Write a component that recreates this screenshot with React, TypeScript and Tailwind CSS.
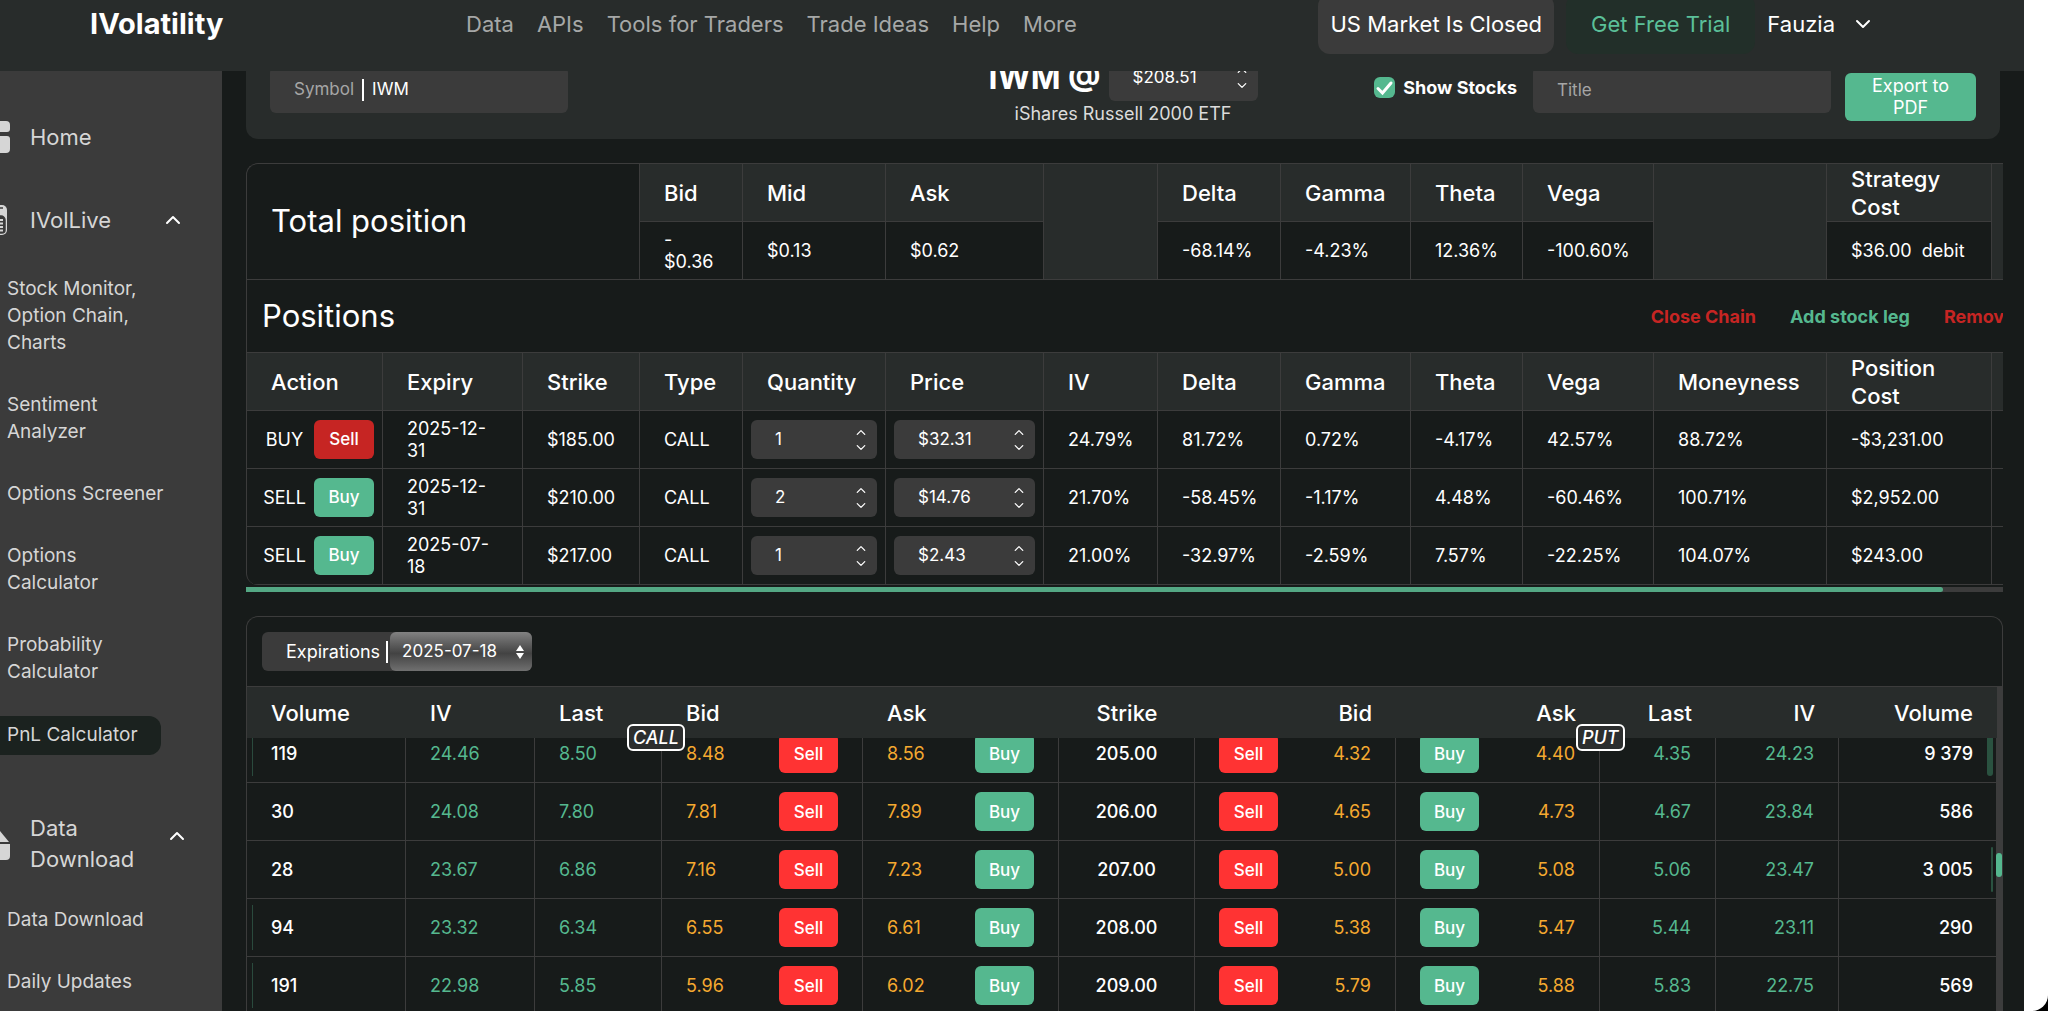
import { useState } from "react";
import { ChevronDown, ChevronUp } from "lucide-react";

const navLinks = ["Data", "APIs", "Tools for Traders", "Trade Ideas", "Help", "More"];

const positions = [
    { side: "BUY", expiry: "2025-12-31", strike: "$185.00", qty: "1", price: "$32.31", iv: "24.79%", delta: "81.72%", gamma: "0.72%", theta: "-4.17%", vega: "42.57%", money: "88.72%", cost: "-$3,231.00" },
    { side: "SELL", expiry: "2025-12-31", strike: "$210.00", qty: "2", price: "$14.76", iv: "21.70%", delta: "-58.45%", gamma: "-1.17%", theta: "4.48%", vega: "-60.46%", money: "100.71%", cost: "$2,952.00" },
    { side: "SELL", expiry: "2025-07-18", strike: "$217.00", qty: "1", price: "$2.43", iv: "21.00%", delta: "-32.97%", gamma: "-2.59%", theta: "7.57%", vega: "-22.25%", money: "104.07%", cost: "$243.00" },
];

const positionHeads = ["Action", "Expiry", "Strike", "Type", "Quantity", "Price", "IV", "Delta", "Gamma", "Theta", "Vega", "Moneyness", "Position Cost"];

// callBar / putBar: width class of the volume bar, empty when there is none
const chain = [
    { call: ["119", "24.46", "8.50", "8.48", "8.56"], strike: "205.00", put: ["4.32", "4.40", "4.35", "24.23", "9 379"], callBar: "w-px", putBar: "w-1.5" },
    { call: ["30", "24.08", "7.80", "7.81", "7.89"], strike: "206.00", put: ["4.65", "4.73", "4.67", "23.84", "586"], callBar: "", putBar: "" },
    { call: ["28", "23.67", "6.86", "7.16", "7.23"], strike: "207.00", put: ["5.00", "5.08", "5.06", "23.47", "3 005"], callBar: "", putBar: "w-0.5" },
    { call: ["94", "23.32", "6.34", "6.55", "6.61"], strike: "208.00", put: ["5.38", "5.47", "5.44", "23.11", "290"], callBar: "w-px", putBar: "" },
    { call: ["191", "22.98", "5.85", "5.96", "6.02"], strike: "209.00", put: ["5.79", "5.88", "5.83", "22.75", "569"], callBar: "w-px", putBar: "" },
];

function Header() {
    return (
        <header className="relative z-10 -mt-1.5 flex h-[77px] shrink-0 items-start bg-[#282c2b] pl-[90px] pr-[149px] text-[22px]">
            <div className="flex h-[60px] w-[136px] items-center">
                <a href="#home" className="text-[29px] font-bold text-white">
                    IVolatility
                </a>
            </div>
            <nav className="ml-60 flex h-[60px] items-center gap-[23px] text-[#a6a8a7]">
                {navLinks.map((link) => (
                    <a key={link} href="#nav" className="whitespace-nowrap hover:text-white">
                        {link}
                    </a>
                ))}
            </nav>
            <div className="ml-auto flex h-[60px] items-stretch gap-3 whitespace-nowrap text-white">
                <div className="flex items-center rounded-xl bg-[#3b3b3b] px-3">US Market Is Closed</div>
                <button type="button" className="rounded-xl bg-[#222f29] px-[25px] text-[#5bc099]">
                    Get Free Trial
                </button>
                <button type="button" className="flex items-center gap-4">
                    Fauzia
                    <ChevronDown className="h-6 w-6" strokeWidth={2} />
                </button>
            </div>
        </header>
    );
}

function SideLink({ text }: { text: string }) {
    return (
        <a href="#tool" className="block w-[170px] pl-[7px] text-[19px] leading-[27px] hover:text-white">
            {text}
        </a>
    );
}

function Sidebar() {
    return (
        <aside className="flex w-[222px] shrink-0 flex-col overflow-hidden bg-[#3b3b3b] text-[#d6d6d6]">
            <a href="#home" className="mt-[50px] flex h-8 items-center text-[22px]">
                <svg className="h-8 w-[30px] shrink-0" viewBox="0 0 30 32" fill="currentColor">
                    <path d="M0 0h6a4 4 0 0 1 4 4v4a3 3 0 0 1-3 3H0z" />
                    <path d="M0 15h7a3 3 0 0 1 3 3v10a4 4 0 0 1-4 4H0z" />
                </svg>
                Home
            </a>
            <button type="button" className="mt-[51px] flex h-8 items-center text-left text-[22px]">
                <svg className="h-8 w-[30px] shrink-0" viewBox="0 0 30 32" fill="none">
                    <path d="M0 1h2a5 5 0 0 1 5 5v20a5 5 0 0 1-5 5H0z" fill="currentColor" />
                    <path d="M0 4h3M0 12h1a4 4 0 0 1 4 4v10a3 3 0 0 1-3 3H0z" fill="#3b3b3b" stroke="#3b3b3b" strokeWidth="1.5" />
                    <path d="M0 16h3M0 19.500h3M0 23h3M0 26.500h3" stroke="currentColor" strokeWidth="2" />
                </svg>
                IVolLive
                <ChevronUp className="ml-[50px] h-6 w-6 text-white" />
            </button>
            <div className="mt-[39px] flex flex-col gap-[35px]">
                <SideLink text="Stock Monitor, Option Chain, Charts" />
                <SideLink text="Sentiment Analyzer" />
                <SideLink text="Options Screener" />
                <SideLink text="Options Calculator" />
                <SideLink text="Probability Calculator" />
            </div>
            <a href="#pnl" className="mt-[31px] flex h-[39px] w-[161px] items-center rounded-r-xl bg-[#1b221f] pl-[7px] text-[19px]">
                PnL Calculator
            </a>
            <button type="button" className="mt-[58px] flex items-center text-left text-[22px] leading-[31px]">
                <svg className="h-10 w-[30px] shrink-0" viewBox="0 0 30 40" fill="currentColor">
                    <path d="M0 7l9 11H0z" />
                    <path d="M0 20h10v12a4 4 0 0 1-4 4H0z" />
                </svg>
                <span className="w-[135px]">Data Download</span>
                <ChevronUp className="mb-4 h-6 w-6 text-white" />
            </button>
            <div className="mt-[31px] flex flex-col gap-[35px]">
                <SideLink text="Data Download" />
                <SideLink text="Daily Updates" />
            </div>
        </aside>
    );
}

function Stepper({ label, value, className = "h-[39px] w-full" }: { label: string; value: string; className?: string }) {
    return (
        <div className={`flex items-center rounded-md bg-[#3b3b3b] pl-6 pr-2 ${className}`}>
            <input aria-label={label} defaultValue={value} className="min-w-0 flex-1 bg-transparent text-[17px] text-white outline-none" />
            <span className="flex flex-col text-white">
                <button type="button" aria-label={`Increase ${label}`}>
                    <ChevronUp className="h-[15px] w-4" />
                </button>
                <button type="button" aria-label={`Decrease ${label}`}>
                    <ChevronDown className="h-[15px] w-4" />
                </button>
            </span>
        </div>
    );
}

function StrategyBar() {
    const [showStocks, setShowStocks] = useState(true);

    return (
        <section className="-mt-[30px] mr-[3px] grid grid-cols-[1fr_auto_1fr] items-center rounded-xl bg-[#282c2b] px-6 py-[13px]">
            <label className="flex h-[46px] w-[298px] items-center gap-2 rounded-md bg-[#3b3b3b] pl-6 text-[17px] text-[#a6a6a6]">
                Symbol
                <span className="h-[22px] w-0.5 bg-white" />
                <input defaultValue="IWM" className="w-40 bg-transparent text-white outline-none" />
            </label>
            <div className="text-center">
                <div className="flex items-center gap-2">
                    <h1 className="text-[32px] font-bold">IWM @</h1>
                    <Stepper label="Stock price" value="$208.51" className="h-[46px] w-[149px]" />
                </div>
                <p className="text-[18px] leading-6 text-[#dcdcdc]">iShares Russell 2000 ETF</p>
            </div>
            <div className="flex items-center justify-end">
                <label className="mb-1.5 flex items-center gap-2 text-[18px] font-bold">
                    <span className="relative h-[21px] w-[21px]">
                        <input
                            type="checkbox"
                            checked={showStocks}
                            onChange={() => setShowStocks(!showStocks)}
                            className="block h-[21px] w-[21px] appearance-none rounded-md bg-[#3b3b3b] checked:bg-[#55b88f]"
                        />
                        {showStocks && (
                            <svg className="pointer-events-none absolute inset-0 h-[21px] w-[21px]" viewBox="0 0 21 21" fill="none">
                                <path d="M4 11.500l4.500 4.500L17 6" stroke="#fff" strokeWidth="3" strokeLinecap="round" />
                            </svg>
                        )}
                    </span>
                    Show Stocks
                </label>
                <input
                    aria-label="Title"
                    placeholder="Title"
                    className="ml-4 h-[46px] w-[298px] rounded-md bg-[#3b3b3b] px-6 text-[17px] outline-none placeholder:text-[#a6a6a6]"
                />
                <button type="button" className="ml-3.5 mt-3.5 h-12 w-[131px] rounded-md bg-[#55b88f] px-4 text-[18px] leading-[22px]">
                    Export to PDF
                </button>
            </div>
        </section>
    );
}

const th = "h-[58px] border-b border-r border-[#3c3c3c] bg-[#282c2b] px-6 text-left text-[22px] font-medium leading-7";
const td = "h-[58px] border-b border-r border-[#3c3c3c] px-6 leading-[22px]";

function PositionCols() {
    return (
        <colgroup>
            <col className="w-[136px]" />
            <col className="w-[140px]" />
            <col className="w-[117px]" />
            <col className="w-[103px]" />
            <col className="w-[143px]" />
            <col className="w-[158px]" />
            <col className="w-[114px]" />
            <col className="w-[123px]" />
            <col className="w-[130px]" />
            <col className="w-[112px]" />
            <col className="w-[131px]" />
            <col className="w-[173px]" />
            <col className="w-[165px]" />
            <col className="w-[71px]" />
        </colgroup>
    );
}

function Positions() {
    return (
        <section className="mt-6">
            <div className="overflow-hidden rounded-l-xl border-l border-t border-[#3c3c3c] text-[18px]">
                <table className="w-full min-w-[1816px] table-fixed border-separate border-spacing-0">
                    <PositionCols />
                    <tbody>
                        <tr>
                            <th rowSpan={2} colSpan={3} className="border-b border-r border-[#3c3c3c] px-6 text-left text-[31px] font-normal">
                                Total position
                            </th>
                            <th className={th}>Bid</th>
                            <th className={th}>Mid</th>
                            <th className={th}>Ask</th>
                            <td rowSpan={2} className="border-b border-r border-[#3c3c3c] bg-[#282c2b]" />
                            <th className={th}>Delta</th>
                            <th className={th}>Gamma</th>
                            <th className={th}>Theta</th>
                            <th className={th}>Vega</th>
                            <td rowSpan={2} className="border-b border-r border-[#3c3c3c] bg-[#282c2b]" />
                            <th className={th}>Strategy Cost</th>
                            <td rowSpan={2} className="border-b border-[#3c3c3c] bg-[#282c2b]" />
                        </tr>
                        <tr>
                            <td className={td}>
                                -<br />
                                $0.36
                            </td>
                            <td className={td}>$0.13</td>
                            <td className={td}>$0.62</td>
                            <td className={td}>-68.14%</td>
                            <td className={td}>-4.23%</td>
                            <td className={td}>12.36%</td>
                            <td className={td}>-100.60%</td>
                            <td className={`${td} whitespace-pre`}>$36.00{"  "}debit</td>
                        </tr>
                    </tbody>
                </table>
                <div className="flex h-[73px] min-w-[1816px] items-center border-b border-[#3c3c3c] pl-[15px]">
                    <h2 className="text-[31px]">Positions</h2>
                    <div className="ml-auto flex gap-[34px] pr-6 font-bold">
                        <button type="button" className="text-[#c62523]">
                            Close Chain
                        </button>
                        <button type="button" className="text-[#55b88f]">
                            Add stock leg
                        </button>
                        <button type="button" className="text-[#c62523]">
                            Remove all
                        </button>
                    </div>
                </div>
                <table className="w-full min-w-[1816px] table-fixed border-separate border-spacing-0">
                    <PositionCols />
                    <thead>
                        <tr>
                            {positionHeads.map((head) => (
                                <th key={head} className={th}>
                                    {head}
                                </th>
                            ))}
                            <th className={th} />
                        </tr>
                    </thead>
                    <tbody>
                        {positions.map((p) => (
                            <tr key={p.strike}>
                                <td className="border-b border-r border-[#3c3c3c] px-2">
                                    <div className="flex items-center">
                                        <span className="flex-1 text-center">{p.side}</span>
                                        <button
                                            type="button"
                                            className={`h-[39px] w-[60px] rounded-md text-[17px] font-medium ${p.side === "BUY" ? "bg-[#c62523]" : "bg-[#55b88f]"}`}
                                        >
                                            {p.side === "BUY" ? "Sell" : "Buy"}
                                        </button>
                                    </div>
                                </td>
                                <td className={td}>{p.expiry}</td>
                                <td className={td}>{p.strike}</td>
                                <td className={td}>CALL</td>
                                <td className="border-b border-r border-[#3c3c3c] px-2">
                                    <Stepper label="Quantity" value={p.qty} />
                                </td>
                                <td className="border-b border-r border-[#3c3c3c] px-2">
                                    <Stepper label="Price" value={p.price} />
                                </td>
                                <td className={td}>{p.iv}</td>
                                <td className={td}>{p.delta}</td>
                                <td className={td}>{p.gamma}</td>
                                <td className={td}>{p.theta}</td>
                                <td className={td}>{p.vega}</td>
                                <td className={td}>{p.money}</td>
                                <td className={td}>{p.cost}</td>
                                <td className={td} />
                            </tr>
                        ))}
                    </tbody>
                </table>
            </div>
            <div className="mt-0.5 h-[5px] bg-[#3c3c3c]">
                <div className="h-full w-[96.6%] rounded-r-sm bg-[#54a884]" />
            </div>
        </section>
    );
}

function ChainCols() {
    return (
        <colgroup>
            <col className="w-[159px]" />
            <col className="w-[129px]" />
            <col className="w-[127px]" />
            <col className="w-[201px]" />
            <col className="w-[196px]" />
            <col className="w-[136px]" />
            <col className="w-[201px]" />
            <col className="w-[204px]" />
            <col className="w-[116px]" />
            <col className="w-[123px]" />
            <col className="w-[158px]" />
        </colgroup>
    );
}

const badge = "absolute top-[25px] rounded-md border-2 border-white bg-[#2c2e2e] px-1 text-[18px] font-medium italic leading-[23px]";

function OrderCell({ price, action, flip }: { price: string; action: "Sell" | "Buy"; flip?: boolean }) {
    return (
        <td className={`${td} text-[#f5a930]`}>
            <div className={`flex items-center justify-between ${flip ? "flex-row-reverse" : ""}`}>
                {price}
                <button
                    type="button"
                    className={`h-[39px] w-[59px] rounded-md text-[17px] font-medium text-white ${action === "Sell" ? "bg-[#ff3333]" : "bg-[#55b88f]"}`}
                >
                    {action}
                </button>
            </div>
        </td>
    );
}

function OptionChain() {
    return (
        <section className="mt-6 flex min-h-0 flex-1 flex-col rounded-t-xl border border-b-0 border-[#3c3c3c] text-[18px]">
            <div className="flex h-[69px] shrink-0 items-center pl-[15px]">
                <label className="flex h-[39px] items-center rounded-md bg-[#3b3b3b] pl-6">
                    Expirations
                    <span className="ml-1.5 h-[22px] w-0.5 bg-white" />
                    <span className="relative ml-0.5">
                        <select className="h-[39px] w-[142px] appearance-none rounded-md bg-linear-to-b from-[#828282] via-[#434343] via-55% to-[#707070] pl-3 text-[17px] text-white">
                            <option>2025-07-18</option>
                        </select>
                        <svg className="pointer-events-none absolute right-2 top-3 h-4 w-2" viewBox="0 0 8 16" fill="#fff">
                            <path d="M4 1l4 6H0zM4 15l4-6H0z" />
                        </svg>
                    </span>
                </label>
            </div>
            <div className="flex min-h-0 flex-1 border-t border-[#3c3c3c]">
                <div className="flex min-w-0 flex-1 flex-col">
                    <table className="relative z-10 w-full table-fixed border-separate border-spacing-0 bg-[#282c2b]">
                        <ChainCols />
                        <thead className="text-left text-[22px] leading-7 [&_th]:h-[51px] [&_th]:px-6 [&_th]:font-medium">
                            <tr>
                                <th>Volume</th>
                                <th>IV</th>
                                <th>Last</th>
                                <th>
                                    <div className="relative">
                                        Bid
                                        <span className={`${badge} -left-[59px]`}>CALL</span>
                                    </div>
                                </th>
                                <th>Ask</th>
                                <th className="text-center">Strike</th>
                                <th className="text-right">Bid</th>
                                <th className="text-right">Ask</th>
                                <th className="text-right">
                                    <div className="relative">
                                        Last
                                        <span className={`${badge} -left-[48px]`}>PUT</span>
                                    </div>
                                </th>
                                <th className="text-right">IV</th>
                                <th className="text-right">Volume</th>
                            </tr>
                        </thead>
                    </table>
                    <div className="min-h-0 flex-1 overflow-hidden">
                        <table className="-mt-[13px] w-full table-fixed border-separate border-spacing-0">
                            <ChainCols />
                            <tbody>
                                {chain.map((row) => (
                                    <tr key={row.strike}>
                                        <td className={`${td} relative font-medium`}>
                                            {row.callBar && <span className={`absolute inset-y-1.5 left-[5px] bg-[#2a4a3d] ${row.callBar}`} />}
                                            {row.call[0]}
                                        </td>
                                        <td className={`${td} text-[#55b88f]`}>{row.call[1]}</td>
                                        <td className={`${td} text-[#55b88f]`}>{row.call[2]}</td>
                                        <OrderCell price={row.call[3]} action="Sell" />
                                        <OrderCell price={row.call[4]} action="Buy" />
                                        <td className={`${td} text-center font-medium`}>{row.strike}</td>
                                        <OrderCell price={row.put[0]} action="Sell" flip />
                                        <OrderCell price={row.put[1]} action="Buy" flip />
                                        <td className={`${td} text-right text-[#55b88f]`}>{row.put[2]}</td>
                                        <td className={`${td} text-right text-[#55b88f]`}>{row.put[3]}</td>
                                        <td className="relative border-b border-[#3c3c3c] px-6 text-right font-medium">
                                            {row.put[4]}
                                            {row.putBar && <span className={`absolute inset-y-1.5 right-1 rounded-sm bg-[#2a5240] ${row.putBar}`} />}
                                        </td>
                                    </tr>
                                ))}
                            </tbody>
                        </table>
                    </div>
                </div>
                <div className="w-1.5 bg-[#3c3c3c] pt-[166px]">
                    <div className="h-6 rounded-full bg-[#55b88f]" />
                </div>
            </div>
        </section>
    );
}

export default function App() {
    return (
        <div className="flex h-screen overflow-hidden bg-black font-['Inter','Liberation_Sans',sans-serif] text-white">
            <div className="flex min-w-0 flex-1 flex-col bg-[#171b1a]">
                <Header />
                <div className="flex min-h-0 flex-1">
                    <Sidebar />
                    <main className="flex min-w-0 flex-1 flex-col overflow-hidden pl-6 pr-[21px]">
                        <StrategyBar />
                        <Positions />
                        <OptionChain />
                    </main>
                </div>
            </div>
            <div className="w-6 shrink-0 rounded-br-2xl bg-white" />
        </div>
    );
}
